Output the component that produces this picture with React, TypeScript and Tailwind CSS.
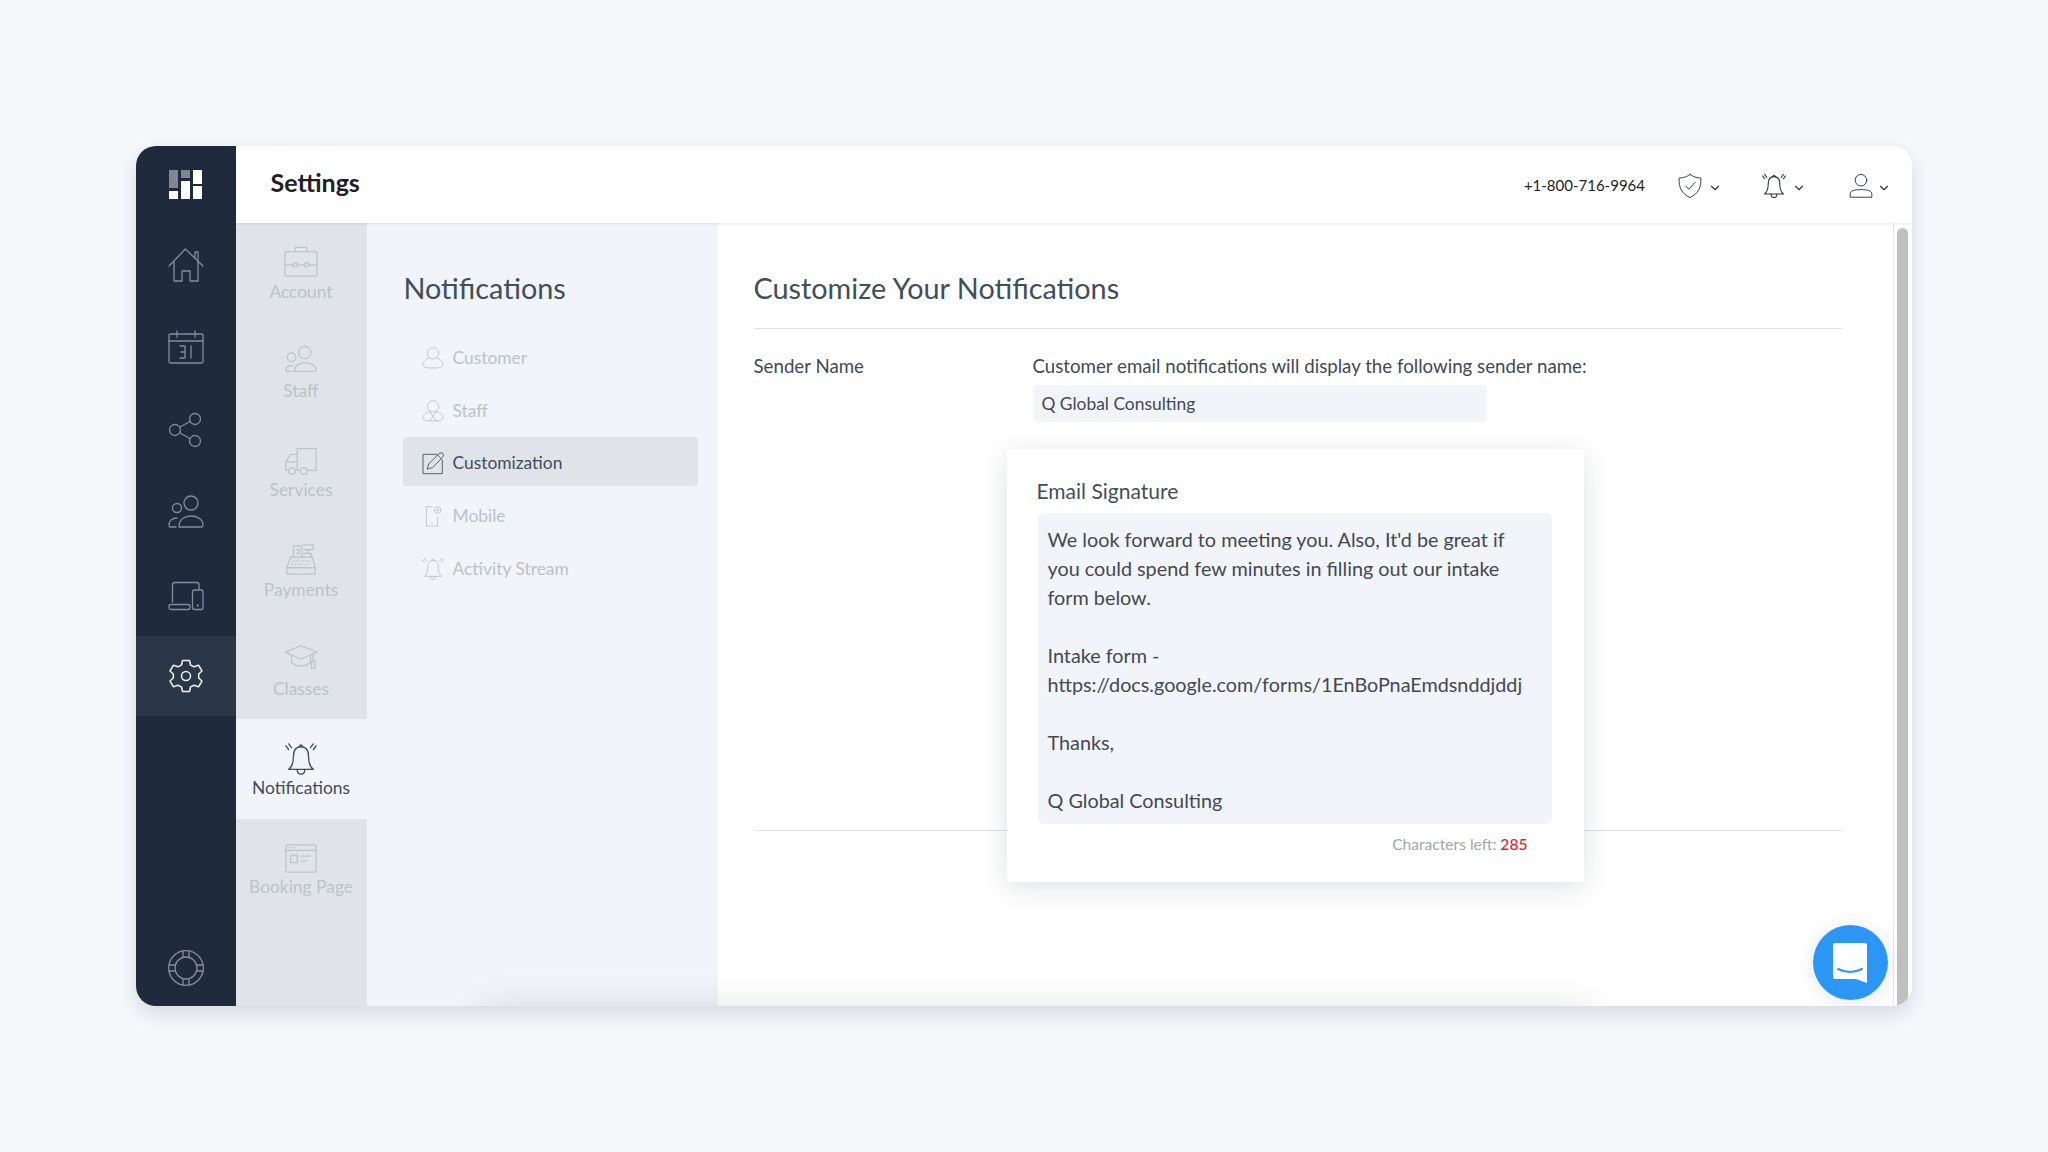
import type { ReactNode } from 'react';
import { ChevronDown } from 'lucide-react';

const Svg = ({ size = 36, sw = 1.3, children }: { size?: number; sw?: number; children: ReactNode }) => (
  <svg viewBox="0 0 36 36" width={size} height={size} fill="none" stroke="currentColor" strokeWidth={sw} strokeLinecap="round" strokeLinejoin="round">
    {children}
  </svg>
);

const Home = () => (
  <Svg>
    <path d="M1 19 L17.5 2 L35 19" />
    <path d="M27 10 V5 H30 V14" />
    <path d="M6 15 V34 H14 V24 H22 V34 H30 V15" />
  </Svg>
);
const Calendar = () => (
  <Svg>
    <rect x="1" y="4" width="34" height="29" rx="1.5" />
    <path d="M1 11 H35 M9 1 V7 M27 1 V7" />
    <path d="M12 16 H17 V28 H12 M13 22 H17 M23 16 V28" />
  </Svg>
);
const Share = () => (
  <Svg>
    <circle cx="7" cy="18" r="5.5" />
    <circle cx="27" cy="7" r="5.5" />
    <circle cx="27" cy="29" r="5.5" />
    <path d="M12 15 L22 9.5 M12 21 L22 26.5" />
  </Svg>
);
const People = () => (
  <Svg>
    <circle cx="23" cy="9" r="7" />
    <path d="M11 33 C11 25 17 22 23 22 C29 22 35 25 35 31 C35 32.5 34 33 33 33 Z" />
    <circle cx="9" cy="14" r="4.5" />
    <path d="M8 33 H2 C1 33 1 32 1 31 C1 27 4 24 9 24" />
  </Svg>
);
const Devices = () => (
  <Svg>
    <path d="M4.5 24 V7 Q4.5 4.5 7 4.5 H29 Q31 4.5 31 7 V11" />
    <rect x="1" y="26.5" width="21" height="5" rx="2" />
    <rect x="24.5" y="12" width="10.5" height="19.5" rx="2" />
    <circle cx="29.7" cy="27.5" r=".5" />
  </Svg>
);
const Gear = () => (
  <Svg sw={1.5}>
    <circle cx="18" cy="18" r="4.5" />
    <path d="M14.5 2.5 H21.5 L22.5 7 L26 8.8 L30.5 7.2 L34 13 L30.7 16 V20 L34 23 L30.5 28.8 L26 27.2 L22.5 29 L21.5 33.5 H14.5 L13.5 29 L10 27.2 L5.5 28.8 L2 23 L5.3 20 V16 L2 13 L5.5 7.2 L10 8.8 L13.5 7 Z" />
  </Svg>
);
const Buoy = () => (
  <Svg>
    <circle cx="18" cy="18" r="17.3" />
    <circle cx="18" cy="18" r="11" />
    <path d="M15 1 V7.5 M21 1 V7.5 M15 28.5 V35 M21 28.5 V35 M1 15 H7.5 M1 21 H7.5 M28.5 15 H35 M28.5 21 H35" />
  </Svg>
);
const Brief = () => (
  <Svg>
    <rect x="1" y="7" width="34" height="26" rx="2" />
    <path d="M12 7 V2.5 H24 V7 M1 21 H10 M14 21 H22 M26 21 H35" />
    <rect x="10" y="19" width="4" height="4" />
    <rect x="22" y="19" width="4" height="4" />
  </Svg>
);
const Team = () => (
  <Svg>
    <circle cx="22" cy="9" r="6.5" />
    <path d="M11 29 C11 23 16 20 22 20 C28 20 34 23 34 27 C34 29 33 29 32 29 Z" />
    <circle cx="8" cy="14" r="4.5" />
    <path d="M8 29 H3 Q2 29 2 27 C2 25 4 23 9 23" />
  </Svg>
);
const Truck = () => (
  <Svg>
    <path d="M14 5 H34 V28 H25 M17 28 H14 V5" />
    <path d="M14 11 H7 L2 19 V28 H4 M2 19 H14" />
    <circle cx="8.5" cy="28.5" r="3.5" />
    <circle cx="21" cy="28.5" r="3.5" />
  </Svg>
);
const Register = () => (
  <Svg>
    <path d="M10 15 V3 H19 V15 M21 2 H31 V7 H21 M25 7 V11 M21 11 H29 V15" />
    <path d="M13 7 H16 V11 H13" />
    <path d="M7 15 H30 L33 26 H3 Z" />
    <rect x="3" y="26" width="30" height="7" rx="1" />
    <path d="M9 19 H27 M8 22.5 H28 M18 29.5 H18.5" strokeDasharray="1 2.5" />
  </Svg>
);
const Cap = () => (
  <Svg>
    <path d="M1 11 L18 4 L35 11 L18 18 Z" />
    <path d="M8 15 V22 Q18 29 28 22 V15 M31 12 V20" />
    <path d="M29.5 20 H32.5 L33 28 H29 Z" />
  </Svg>
);
const BellRing = ({ sw = 1.4 }: { sw?: number }) => (
  <Svg sw={sw}>
    <path d="M18 5 C11 5 10 10 10 15 C10 22 9 26 5 29 H31 C27 26 26 22 26 15 C26 10 25 5 18 5 Z" />
    <path d="M16 5 Q18 1 20 5 M14 29 Q14 34 18 34 Q22 34 22 29" />
    <path d="M2 4 L5 8 M5 2 L8 6 M34 4 L31 8 M31 2 L28 6" />
  </Svg>
);
const Browser = () => (
  <Svg>
    <rect x="2" y="4" width="32" height="29" rx="2" />
    <path d="M2 10 H34 M6 7 H6.5 M9 7 H9.5 M12 7 H12.5 M18 16 H28 M18 21 H24" />
    <rect x="7" y="15" width="7" height="8" />
  </Svg>
);
const Customer = () => (
  <Svg>
    <circle cx="18" cy="11" r="8.5" />
    <path d="M12 18 C4 21 3 25 3 28 C3 32 8 33 18 33 C28 33 33 32 33 28 C33 25 32 21 24 18" />
  </Svg>
);
const StaffTie = () => (
  <Svg>
    <circle cx="18" cy="11" r="8.5" />
    <path d="M13 19 C5 21 3 25 3 28 C3 32 8 33 18 33 C28 33 33 32 33 28 C33 25 31 21 23 19 L13 33 M13 19 L23 33" />
  </Svg>
);
const Edit = () => (
  <Svg>
    <path d="M24 5 H3 V34 H32 V14" />
    <path d="M12 19 L27 4 Q30 1 33 4 Q35 7 32 10 L17 25 L10 27 Z M25 6 L31 12" />
  </Svg>
);
const Mobile = () => (
  <Svg>
    <path d="M17 4 H8 V33 H25 V20" />
    <circle cx="25" cy="9" r="5" />
    <circle cx="25" cy="9" r="1.5" />
    <path d="M16 29 H17" />
  </Svg>
);
const Shield = () => (
  <Svg size={26}>
    <path d="M18 2 C22 5 28 7 33 7 C34 20 29 29 18 34 C7 29 2 20 3 7 C8 7 14 5 18 2 Z" />
    <path d="M12 18 L16.5 22.5 L25 13" />
  </Svg>
);
const UserIcon = () => (
  <Svg size={26}>
    <circle cx="18" cy="10" r="8" />
    <path d="M3 33 V29 C3 25 8 23 18 23 C28 23 33 25 33 29 V33 Z" />
  </Svg>
);

const railItems = [
  { id: 'home', icon: <Home />, nudge: 'pt-[2px]' },
  { id: 'calendar', icon: <Calendar />, nudge: 'pt-[4px]' },
  { id: 'share', icon: <Share />, nudge: 'pt-[2px]' },
  { id: 'people', icon: <People />, nudge: 'pt-[2px]' },
  { id: 'devices', icon: <Devices />, nudge: 'pt-[4px]' },
  { id: 'settings', icon: <Gear />, nudge: 'bg-[#2b3648] text-[#eef0f3]' },
];

const settingsItems = [
  { label: 'Account', icon: <Brief /> },
  { label: 'Staff', icon: <Team /> },
  { label: 'Services', icon: <Truck /> },
  { label: 'Payments', icon: <Register /> },
  { label: 'Classes', icon: <Cap /> },
  { label: 'Notifications', icon: <BellRing />, active: true },
  { label: 'Booking Page', icon: <Browser /> },
];

const sectionItems = [
  { label: 'Customer', icon: <Customer /> },
  { label: 'Staff', icon: <StaffTie /> },
  { label: 'Customization', icon: <Edit />, active: true },
  { label: 'Mobile', icon: <Mobile /> },
  { label: 'Activity Stream', icon: <BellRing sw={1.3} /> },
];

export default function App() {
  return (
    <div className="w-[2048px] h-[1152px] bg-[#f5f7fb] pt-[146px] pl-[135.5px] font-['Lato','Open_Sans',sans-serif] overflow-hidden">
      <div className="relative w-[1776.5px] h-[860px] flex rounded-[20px] overflow-hidden bg-white shadow-[0_8px_20px_rgba(30,40,60,0.14)]">

        {/* Dark rail */}
        <div className="w-[100px] shrink-0 bg-[#1f2a3c] flex flex-col text-[#858d99]">
          <div className="h-[77px] flex items-center justify-center">
            <svg viewBox="0 0 33 29" width="33" height="29">
              <rect x="0" y="0" width="9" height="18" fill="#7f8794" />
              <rect x="12" y="0" width="9" height="8" fill="#7f8794" />
              <rect x="24" y="0" width="9" height="14" fill="#fff" />
              <rect x="0" y="21" width="9" height="8" fill="#fff" />
              <rect x="12" y="11" width="9" height="18" fill="#fff" />
              <rect x="24" y="16" width="9" height="13" fill="#fff" />
            </svg>
          </div>
          <div className="flex flex-col gap-[2.4px] pt-[1px]">
            {railItems.map((item) => (
              <div key={item.id} className={'h-[80px] flex items-center justify-center ' + item.nudge}>
                {item.icon}
              </div>
            ))}
          </div>
          <div className="mt-auto h-[76px] flex items-center justify-center">
            <Buoy />
          </div>
        </div>

        <div className="flex-1 min-w-0 flex flex-col">
          {/* Top bar */}
          <div className="relative z-10 h-[77px] shrink-0 bg-white flex items-center pl-[35px] shadow-[0_1px_3px_rgba(30,40,60,0.1)]">
            <h1 className="text-[25px] font-bold text-[#1d2127] mb-[4px]">Settings</h1>
            <div className="ml-auto flex items-center pt-[2px] text-[#2c3440]">
              <span className="text-[15px] text-[#1d2127] mr-[32px]">+1-800-716-9964</span>
              <Shield />
              <ChevronDown className="w-[14px] h-[14px] ml-[5px] mt-[5px] mr-[39px]" />
              <Svg size={26} sw={1.5}>
                <path d="M18 5 C11 5 10 10 10 15 C10 22 9 26 5 29 H31 C27 26 26 22 26 15 C26 10 25 5 18 5 Z" />
                <path d="M16 5 Q18 1 20 5 M14 29 Q14 34 18 34 Q22 34 22 29" />
                <path d="M2 4 L5 8 M5 2 L8 6 M34 4 L31 8 M31 2 L28 6" />
              </Svg>
              <ChevronDown className="w-[14px] h-[14px] ml-[5px] mt-[5px] mr-[42px]" />
              <UserIcon />
              <ChevronDown className="w-[14px] h-[14px] ml-[3px] mt-[5px] mr-[21px]" />
            </div>
          </div>

          <div className="flex-1 min-h-0 flex">
            {/* Settings categories */}
            <div className="w-[131px] shrink-0 bg-[#e0e4e8]">
              {settingsItems.map((item) => (
                <div
                  key={item.label}
                  className={
                    item.active
                      ? 'h-[99.3px] flex flex-col items-center justify-center pt-[1px] bg-[#f1f4f8] text-[#3f4e5b]'
                      : 'h-[99.3px] flex flex-col items-center justify-center pt-[1px] text-[#bcc2c8]'
                  }
                >
                  <span className="h-[36px] pt-[1px] flex items-center justify-center [&>svg]:w-[34px] [&>svg]:h-[34px]">{item.icon}</span>
                  <span className="text-[17.4px] leading-[22px] mt-[1px]">{item.label}</span>
                </div>
              ))}
            </div>

            {/* Section list */}
            <div className="w-[351px] shrink-0 bg-[#f1f4f8] pl-[36px] pr-[20px] pt-[45px]">
              <h2 className="text-[28.8px] leading-[40px] pl-[1px] text-[#3f4f5c]">Notifications</h2>
              <div className="mt-[24px] flex flex-col gap-[3.7px]">
                {sectionItems.map((item) => (
                  <div
                    key={item.label}
                    className={
                      item.active
                        ? 'h-[49px] rounded-[4px] bg-[#e0e4e8] flex items-center pl-[18px] pt-[3px] gap-[8px] text-[#3f4e5b]'
                        : 'h-[49px] flex items-center pl-[18px] pt-[3px] gap-[8px] text-[#bcc2c8]'
                    }
                  >
                    <span className="w-[24px] h-[24px] flex items-center justify-center [&>svg]:w-[24px] [&>svg]:h-[24px]">{item.icon}</span>
                    <span className="text-[17.4px]">{item.label}</span>
                  </div>
                ))}
              </div>
            </div>

            {/* Main */}
            <div className="relative flex-1 min-w-0 flex bg-white">
              <div className="flex-1 min-w-0 pl-[36px] pr-[51px] pt-[45px]">
                <h2 className="text-[28.8px] leading-[40px] text-[#3f4f5c] pb-[20px] border-b border-[#dfe2e6]">Customize Your Notifications</h2>
                <div className="flex mt-[25px] text-[18.7px] text-[#3f4a55]">
                  <div className="w-[279px] leading-[24px]">Sender Name</div>
                  <div>
                    <p className="leading-[24px]">Customer email notifications will display the following sender name:</p>
                    <div className="mt-[7px] w-[454px] h-[37px] rounded-[4px] bg-[#f1f4f8] flex items-center pl-[9px] pt-[2px] text-[17.4px]">Q Global Consulting</div>
                  </div>
                </div>
                <div className="mt-[408px] border-b border-[#dfe2e6]" />
              </div>

              {/* Scrollbar */}
              <div className="w-[19px] shrink-0 border-l border-[#e8e8e8] pl-[3px] pt-[5px]">
                <div className="w-[11px] h-full rounded-t-[6px] bg-[#c0c0c0]" />
              </div>

              {/* Email signature card */}
              <div className="absolute left-[289px] top-[226px] w-[577px] h-[433px] bg-white rounded-[3px] shadow-[0_6px_30px_rgba(30,40,60,0.14)] pl-[30px] pr-[32px] pt-[28px]">
                <div className="text-[21px] leading-[28px] text-[#3f4f5c]">Email Signature</div>
                <div className="mt-[8px] ml-[1px] h-[311px] rounded-[6px] bg-[#f1f4f8] pl-[10px] pr-[20px] pt-[12px] text-[19.8px] leading-[29px] text-[#44494f]">
                  <p>We look forward to meeting you. Also, It'd be great if you could spend few minutes in filling out our intake form below.</p>
                  <p className="mt-[29px]">Intake form -</p>
                  <p>https://docs.google.com/forms/1EnBoPnaEmdsnddjddj</p>
                  <p className="mt-[29px]">Thanks,</p>
                  <p className="mt-[29px]">Q Global Consulting</p>
                </div>
                <div className="mt-[9px] pr-[24px] text-right text-[15.6px] text-[#a3a6aa]">
                  Characters left: <span className="font-medium text-[#f01a2c]">285</span>
                </div>
              </div>

              {/* Chat launcher */}
              <div className="absolute left-[1095px] top-[702px] w-[75px] h-[75px] rounded-full bg-[#2c96f4] flex items-center justify-center shadow-[0_2px_20px_rgba(30,40,60,0.12)]">
                <svg viewBox="0 0 36 42" width="36" height="42">
                  <path d="M3 1 H33 Q35 1 35 3 V41 L24 37 H3 Q1 37 1 35 V3 Q1 1 3 1 Z" fill="white" />
                  <path d="M6 27 Q18 33 30 27" fill="none" stroke="#2c96f4" strokeWidth="2" strokeLinecap="round" />
                </svg>
              </div>
            </div>
          </div>
        </div>

        {/* Shadow of whatever sits under the fold */}
        <div className="absolute left-[345px] bottom-[-40px] w-[1110px] h-[40px] shadow-[0_0_36px_rgba(30,40,60,0.12)] pointer-events-none" />
      </div>
    </div>
  );
}
